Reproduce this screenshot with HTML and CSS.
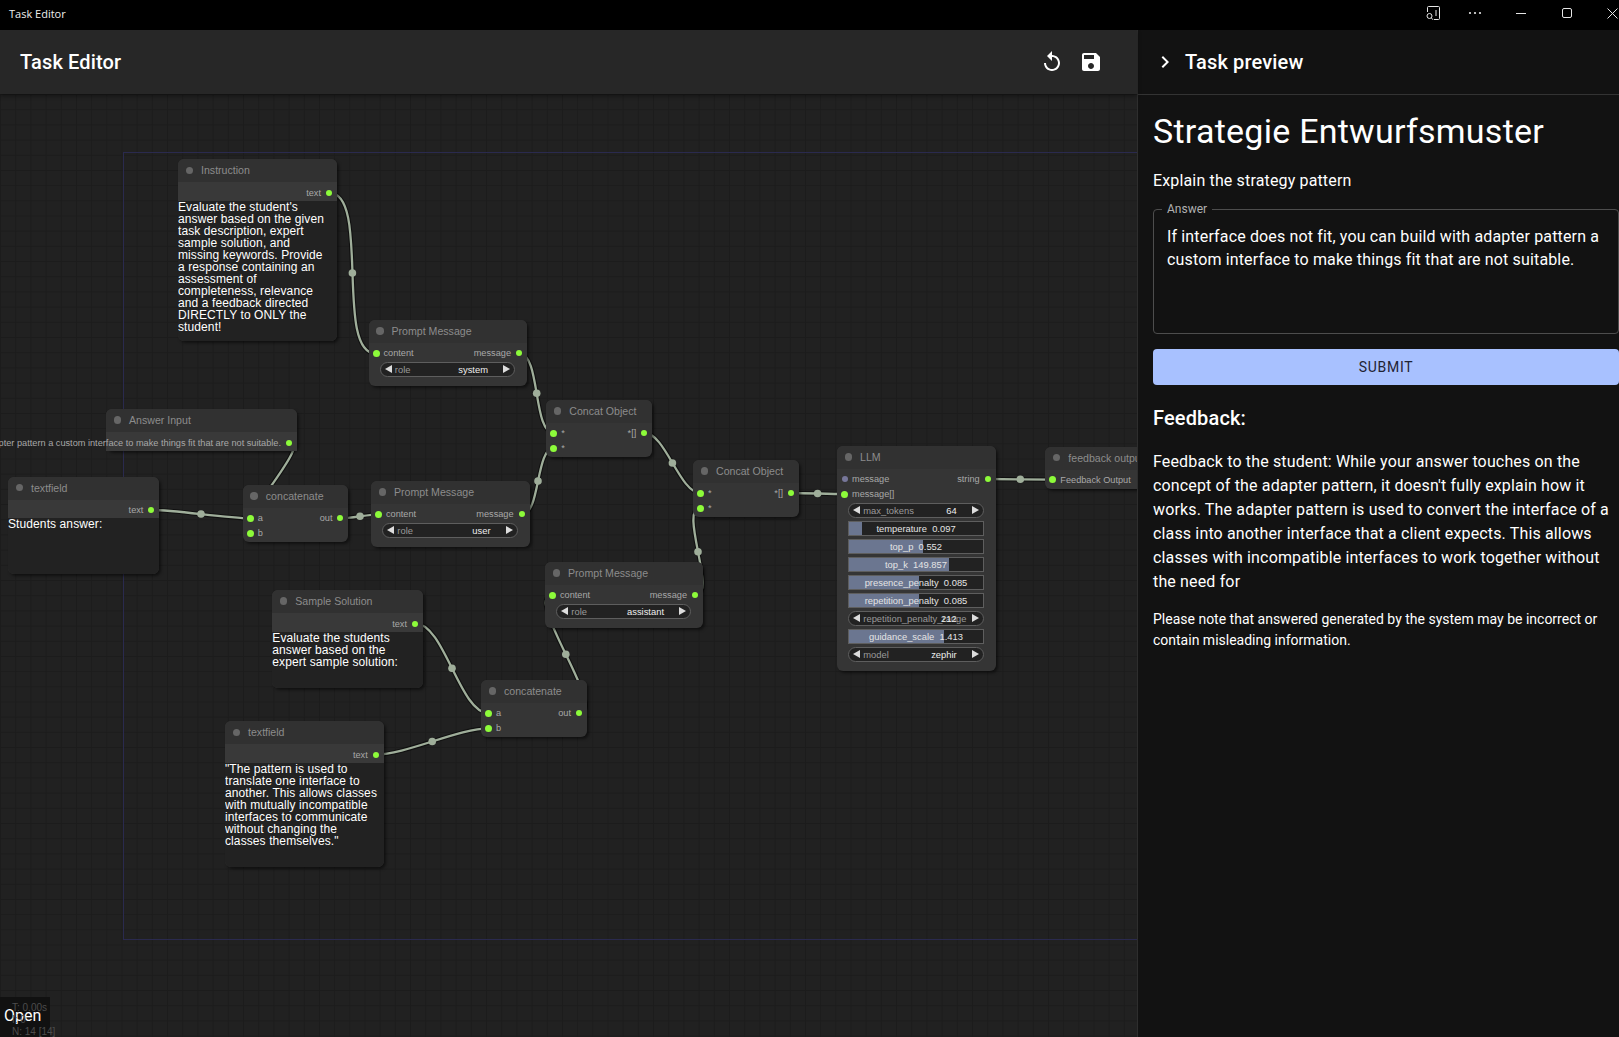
FILE: index.html
```html
<!DOCTYPE html>
<html lang="en">
<head>
  <meta charset="UTF-8" />
  <title>Task Editor</title>
  <link rel="stylesheet" href="styles.css">
</head>
<body>
  <!-- WINDOW TITLE BAR -->
  <div class="titlebar">
    <span class="titlebar-name">Task Editor</span>
    <div class="titlebar-btns">
      <svg class="win-inspect" width="16" height="16" viewBox="0 0 16 16"><path d="M2.5 7V2.5a1 1 0 0 1 1-1h10a1 1 0 0 1 1 1v11a1 1 0 0 1-1 1H9M11 5v6"/><circle cx="4.5" cy="11" r="2.5"/><path d="M6.3 12.8 8 14.8"/></svg>
      <svg class="win-more" width="14" height="4" viewBox="0 0 14 4"><circle cx="2" cy="2" r="1.1"/><circle cx="7" cy="2" r="1.1"/><circle cx="12" cy="2" r="1.1"/></svg>
      <svg class="win-min" width="10" height="10" viewBox="0 0 10 10"><path d="M0 5.5h10"/></svg>
      <svg class="win-max" width="10" height="10" viewBox="0 0 10 10"><rect x=".5" y=".5" width="9" height="9" rx="1.5"/></svg>
      <svg class="win-close" width="11" height="11" viewBox="0 0 11 11"><path d="M.5.5l10 10M10.5.5l-10 10"/></svg>
    </div>
  </div>

  <div class="main">
    <!-- EDITOR -->
    <div class="editor">
      <header class="editor-header">
        <h1>Task Editor</h1>
        <div class="editor-actions">
          <svg width="24" height="24" viewBox="0 0 24 24"><path d="M12 5V1L7 6l5 5V7c3.31 0 6 2.69 6 6s-2.69 6-6 6-6-2.69-6-6H4c0 4.42 3.58 8 8 8s8-3.58 8-8-3.58-8-8-8z"/></svg>
          <svg width="24" height="24" viewBox="0 0 24 24"><path d="M17 3H5c-1.11 0-2 .9-2 2v14c0 1.1.89 2 2 2h14c1.1 0 2-.9 2-2V7l-4-4zm-5 16c-1.66 0-3-1.34-3-3s1.34-3 3-3 3 1.34 3 3-1.34 3-3 3zm3-10H5V5h10v4z"/></svg>
        </div>
      </header>

      <div class="canvas">
        <div class="group-box"></div>

        <!-- wires, in page coordinates -->
        <svg class="wires" width="1137" height="943" viewBox="0 94 1137 943">
          <defs>
            <g id="links">
              <path d="M329 192.7C371 192.7 334 353.7 376 353.7"/>
              <path d="M519.3 353.7C540.9 353.7 532.4 433 554 433"/>
              <path d="M522 514.3C540.4 514.3 535.6 448 554 448"/>
              <path d="M644.7 433C665.2 433 679.8 493 700.3 493"/>
              <path d="M695.7 595.3C717.6 595.3 678.4 508 700.3 508"/>
              <path d="M791 493C804.3 493 831 494 844.3 494"/>
              <path d="M988 479C1004 479 1036.5 479.7 1052.7 479.7"/>
              <path d="M289.6 442C314.5 442 225.4 533.3 250.3 533.3"/>
              <path d="M151.9 510C176.6 510 225.6 518.3 250.3 518.3"/>
              <path d="M341 518.3C350.5 518.3 369.3 514.3 378.8 514.3"/>
              <path d="M415.3 623.3C444.3 623.3 459.7 713.3 488.7 713.3"/>
              <path d="M375.7 754.7C404.7 754.7 459.7 728.3 488.7 728.3"/>
              <path d="M579.3 713.3C609.6 713.3 522 595.3 552.3 595.3"/>
            </g>
          </defs>
          <use href="#links" class="wire-edge"/>
          <use href="#links" class="wire-line"/>
          <g class="wire-dots">
            <circle cx="352.4" cy="273" r="3.8"/>
            <circle cx="536.7" cy="393.3" r="3.8"/>
            <circle cx="538" cy="481" r="3.8"/>
            <circle cx="672.4" cy="463" r="3.8"/>
            <circle cx="698" cy="551.7" r="3.8"/>
            <circle cx="817.6" cy="493.5" r="3.8"/>
            <circle cx="1020.3" cy="479.3" r="3.8"/>
            <circle cx="201" cy="514" r="3.8"/>
            <circle cx="360" cy="516.3" r="3.8"/>
            <circle cx="452" cy="668.3" r="3.8"/>
            <circle cx="432.2" cy="741.5" r="3.8"/>
            <circle cx="565.8" cy="654.3" r="3.8"/>
          </g>
        </svg>

        <!-- nodes -->
        <div class="node node-instruction">
          <div class="node-title"><i></i>Instruction</div>
          <div class="slots slots-text">
            <div class="slot-row"><span class="slot-out">text<b></b></span></div>
          </div>
          <div class="node-text">Evaluate the student's answer based on the given task description, expert sample solution, and missing keywords. Provide a response containing an assessment of completeness, relevance and a feedback directed DIRECTLY to ONLY the student!</div>
        </div>

        <div class="node node-prompt1">
          <div class="node-title"><i></i>Prompt Message</div>
          <div class="slots">
            <div class="slot-row"><span class="slot-in"><b></b>content</span><span class="slot-out">message<b></b></span></div>
          </div>
          <div class="widgets">
            <div class="pill"><span class="pill-label">role</span><span class="pill-value">system</span></div>
          </div>
        </div>

        <div class="node node-answer">
          <div class="node-title"><i></i>Answer Input</div>
          <div class="slots slots-text">
            <div class="slot-row"><span class="slot-out">If interface does not fit, you can build with adapter pattern a custom interface to make things fit that are not suitable.<b></b></span></div>
          </div>
        </div>

        <div class="node node-textfield1">
          <div class="node-title"><i></i>textfield</div>
          <div class="slots slots-text">
            <div class="slot-row"><span class="slot-out">text<b></b></span></div>
          </div>
          <div class="node-text">Students answer:</div>
        </div>

        <div class="node node-concatenate1">
          <div class="node-title"><i></i>concatenate</div>
          <div class="slots">
            <div class="slot-row"><span class="slot-in"><b></b>a</span><span class="slot-out">out<b></b></span></div>
            <div class="slot-row"><span class="slot-in"><b></b>b</span></div>
          </div>
        </div>

        <div class="node node-prompt2">
          <div class="node-title"><i></i>Prompt Message</div>
          <div class="slots">
            <div class="slot-row"><span class="slot-in"><b></b>content</span><span class="slot-out">message<b></b></span></div>
          </div>
          <div class="widgets">
            <div class="pill"><span class="pill-label">role</span><span class="pill-value">user</span></div>
          </div>
        </div>

        <div class="node node-object1">
          <div class="node-title"><i></i>Concat Object</div>
          <div class="slots">
            <div class="slot-row"><span class="slot-in"><b></b>*</span><span class="slot-out">*[]<b></b></span></div>
            <div class="slot-row"><span class="slot-in"><b></b>*</span></div>
          </div>
        </div>

        <div class="node node-object2">
          <div class="node-title"><i></i>Concat Object</div>
          <div class="slots">
            <div class="slot-row"><span class="slot-in"><b></b>*</span><span class="slot-out">*[]<b></b></span></div>
            <div class="slot-row"><span class="slot-in"><b></b>*</span></div>
          </div>
        </div>

        <div class="node node-prompt3">
          <div class="node-title"><i></i>Prompt Message</div>
          <div class="slots">
            <div class="slot-row"><span class="slot-in"><b></b>content</span><span class="slot-out">message<b></b></span></div>
          </div>
          <div class="widgets">
            <div class="pill"><span class="pill-label">role</span><span class="pill-value">assistant</span></div>
          </div>
        </div>

        <div class="node node-llm">
          <div class="node-title"><i></i>LLM</div>
          <div class="slots">
            <div class="slot-row"><span class="slot-in"><b class="slot-empty"></b>message</span><span class="slot-out">string<b></b></span></div>
            <div class="slot-row"><span class="slot-in"><b></b>message[]</span></div>
          </div>
          <div class="widgets">
            <div class="pill"><span class="pill-label">max_tokens</span><span class="pill-value">64</span></div>
            <div class="slider"><div class="slider-fill" style="width:9.6%"></div><span>temperature  0.097</span></div>
            <div class="slider"><div class="slider-fill" style="width:55%"></div><span>top_p  0.552</span></div>
            <div class="slider"><div class="slider-fill" style="width:74.6%"></div><span>top_k  149.857</span></div>
            <div class="slider"><div class="slider-fill" style="width:52%"></div><span>presence_penalty  0.085</span></div>
            <div class="slider"><div class="slider-fill" style="width:52%"></div><span>repetition_penalty  0.085</span></div>
            <div class="pill"><span class="pill-label">repetition_penalty_range</span><span class="pill-value">212</span></div>
            <div class="slider"><div class="slider-fill" style="width:70.7%"></div><span>guidance_scale  1.413</span></div>
            <div class="pill"><span class="pill-label">model</span><span class="pill-value">zephir</span></div>
          </div>
        </div>

        <div class="node node-feedback">
          <div class="node-title"><i></i>feedback output</div>
          <div class="slots">
            <div class="slot-row"><span class="slot-in"><b></b>Feedback Output</span></div>
          </div>
        </div>

        <div class="node node-sample">
          <div class="node-title"><i></i>Sample Solution</div>
          <div class="slots slots-text">
            <div class="slot-row"><span class="slot-out">text<b></b></span></div>
          </div>
          <div class="node-text">Evaluate the students answer based on the expert sample solution:</div>
        </div>

        <div class="node node-concatenate2">
          <div class="node-title"><i></i>concatenate</div>
          <div class="slots">
            <div class="slot-row"><span class="slot-in"><b></b>a</span><span class="slot-out">out<b></b></span></div>
            <div class="slot-row"><span class="slot-in"><b></b>b</span></div>
          </div>
        </div>

        <div class="node node-textfield2">
          <div class="node-title"><i></i>textfield</div>
          <div class="slots slots-text">
            <div class="slot-row"><span class="slot-out">text<b></b></span></div>
          </div>
          <div class="node-text">"The pattern is used to translate one interface to another. This allows classes with mutually incompatible interfaces to communicate without changing the classes themselves."</div>
        </div>

        <!-- bottom left corner -->
        <div class="open-box">Open</div>
        <div class="graph-info">T: 0.00s<br>I: 0<br>N: 14 [14]</div>
      </div>
    </div>

    <!-- TASK PREVIEW -->
    <aside class="preview">
      <div class="preview-header">
        <svg width="24" height="24" viewBox="0 0 24 24"><path d="M10 6 8.59 7.41 13.17 12l-4.58 4.59L10 18l6-6z"/></svg>
        <h2>Task preview</h2>
      </div>
      <div class="preview-body">
        <h3>Strategie Entwurfsmuster</h3>
        <p class="question">Explain the strategy pattern</p>
        <fieldset class="answer">
          <legend>Answer</legend>
          <div class="answer-text">If interface does not fit, you can build with adapter pattern a custom interface to make things fit that are not suitable.</div>
        </fieldset>
        <button class="submit">Submit</button>
        <h4>Feedback:</h4>
        <p class="feedback">Feedback to the student: While your answer touches on the concept of the adapter pattern, it doesn't fully explain how it works. The adapter pattern is used to convert the interface of a class into another interface that a client expects. This allows classes with incompatible interfaces to work together without the need for</p>
        <p class="note">Please note that answered generated by the system may be incorrect or contain misleading information.</p>
      </div>
    </aside>
  </div>
</body>
</html>
```

FILE: styles.css
```css
:root {
  --wire: #9fae9a;
  --slot: #8dfb3a;
  --node: #353535;
  --node-title: #313131;
}
* {
  box-sizing: border-box;
}
html, body {
  height: 100%;
  overflow: hidden;
}
body {
  margin: 0;
  background: #121212;
  color: #fff;
  font-family: Roboto, sans-serif;
  display: flex;
  flex-direction: column;
}

/* title bar */
.titlebar {
  height: 30px;
  flex: none;
  background: #000;
  display: flex;
  align-items: center;
  justify-content: space-between;
  padding: 0 1px 4px 9px;
}
.titlebar-name {
  font-family: "Open Sans", sans-serif;
  font-size: 11px;
  color: #eee;
}
.titlebar-btns {
  display: flex;
  align-items: center;
}
.titlebar-btns svg {
  fill: none;
  stroke: #e6e6e6;
  stroke-width: 1;
}
.titlebar-btns .win-more {
  fill: #e6e6e6;
  stroke: none;
  margin-left: 27px;
}
.win-min {
  margin-left: 34px;
}
.win-max {
  margin-left: 36px;
}
.win-close {
  margin-left: 35px;
}

.main {
  flex: 1;
  display: flex;
  min-height: 0;
}

/* editor */
.editor {
  width: 1137px;
  flex: none;
  display: flex;
  flex-direction: column;
}
.editor-header {
  height: 64px;
  flex: none;
  background: #272727;
  display: flex;
  align-items: center;
  justify-content: space-between;
  padding: 0 34px 0 20px;
  box-shadow: 0 2px 4px rgba(0, 0, 0, 0.4);
  position: relative;
  z-index: 2;
}
.editor-header h1 {
  margin: 0;
  font-size: 20px;
  font-weight: 500;
  letter-spacing: 0.15px;
}
.editor-actions {
  display: flex;
  gap: 15px;
}
.editor-actions svg {
  fill: #fff;
}

/* node canvas */
.canvas {
  flex: 1;
  position: relative;
  overflow: hidden;
  background-color: #212121;
  background-image:
    linear-gradient(#1c1c1c 1px, transparent 1px),
    linear-gradient(90deg, #1c1c1c 1px, transparent 1px);
  background-size: 15.2px 15.2px;
}
.group-box {
  position: absolute;
  left: 123px;
  top: 58px;
  width: 1100px;
  height: 788px;
  border: 1px solid #2a2a4e;
}
.wires {
  position: absolute;
  left: 0;
  top: 0;
}
.wire-edge {
  fill: none;
  stroke: rgba(0, 0, 0, 0.5);
  stroke-width: 4.5;
}
.wire-line {
  fill: none;
  stroke: var(--wire);
  stroke-width: 2.3;
}
.wire-dots {
  fill: var(--wire);
}

.node {
  position: absolute;
  display: flex;
  flex-direction: column;
  background: var(--node);
  border-radius: 6px;
  box-shadow: 2px 2px 3px rgba(0, 0, 0, 0.5);
  font-family: "Liberation Sans", Arial, sans-serif;
}
.node-title {
  height: 23px;
  flex: none;
  display: flex;
  align-items: center;
  padding: 0 0 1px 7.5px;
  background: var(--node-title);
  border-radius: 6px 6px 0 0;
  font-size: 10.6px;
  color: #8c8c8c;
  white-space: nowrap;
}
.node-title i {
  width: 7.5px;
  height: 7.5px;
  border-radius: 50%;
  background: #666;
  margin-right: 8px;
}
.slots {
  flex: none;
  padding-top: 2.5px;
}
.slots-text {
  height: 19px;
  padding-top: 3px;
  background: #393939;
}
.slot-row {
  height: 15px;
  display: flex;
  align-items: center;
  justify-content: flex-end;
  font-size: 9.2px;
  color: #a8a8a8;
  white-space: nowrap;
}
.slot-in, .slot-out {
  display: flex;
  align-items: center;
}
.slot-in {
  padding-left: 4px;
  margin-right: auto;
}
.slot-in b {
  width: 7px;
  height: 7px;
  margin-right: 4px;
  border-radius: 50%;
  background: var(--slot);
}
.slot-in b.slot-empty {
  background: #77779a;
  width: 6px;
  height: 6px;
  margin-left: 0.5px;
  margin-right: 4.5px;
}
.slot-out {
  flex: none;
  padding-right: 5px;
}
.slot-out b {
  flex: none;
  width: 6px;
  height: 6px;
  margin-left: 5px;
  border-radius: 50%;
  background: var(--slot);
}
.node-text {
  flex: 1;
  margin-top: -0.5px;
  padding-right: 6px;
  background: #222;
  border-radius: 0 0 6px 6px;
  color: #fff;
  font-size: 12px;
  line-height: 12px;
  letter-spacing: 0.1px;
  overflow: hidden;
}
.widgets {
  display: flex;
  flex-direction: column;
  gap: 2.8px;
  padding: 1.5px 12px 0 11.3px;
  font-size: 9.4px;
}
.pill {
  height: 15.2px;
  display: flex;
  align-items: center;
  padding: 0 26px 0 14px;
  background: #222;
  border: 1px solid #5e5e5e;
  border-radius: 8px;
  position: relative;
  white-space: nowrap;
}
.pill::before, .pill::after {
  content: '';
  position: absolute;
  top: 2.1px;
  border-style: solid;
  border-color: transparent;
  border-width: 4.5px 0;
}
.pill::before {
  left: 4px;
  border-right: 7px solid #ddd;
}
.pill::after {
  right: 4px;
  border-left: 7px solid #ddd;
}
.pill-label {
  width: 0;
  color: #9a9a9a;
}
.pill-value {
  margin-left: auto;
  color: #eee;
}
.slider {
  height: 15.2px;
  background: #222;
  border: 1px solid #5e5e5e;
  position: relative;
  display: flex;
  align-items: center;
  justify-content: center;
  color: #e4e4e4;
  white-space: pre;
}
.slider span {
  position: relative;
}
.slider-fill {
  position: absolute;
  left: 0;
  top: 0;
  bottom: 0;
  background: #6b7690;
}

/* node places on the graph (top = page y - 94) */
.node-instruction { left: 178px; top: 65.3px; width: 159px; height: 181.7px; }
.node-prompt1 { left: 368.5px; top: 226px; width: 158.5px; height: 66px; }
.node-answer { left: 106px; top: 315px; width: 191px; height: 42px; }
.node-textfield1 { left: 8px; top: 382.7px; width: 151.4px; height: 97.6px; }
.node-concatenate1 { left: 242.8px; top: 391px; width: 105.7px; height: 57.3px; }
.node-prompt2 { left: 371px; top: 387px; width: 158.6px; height: 66px; }
.node-object1 { left: 546.3px; top: 306px; width: 106px; height: 57px; }
.node-object2 { left: 693px; top: 366px; width: 106px; height: 57px; }
.node-prompt3 { left: 545px; top: 468px; width: 158px; height: 66px; }
.node-llm { left: 837px; top: 352px; width: 158.7px; height: 225px; }
.node-feedback { left: 1045.3px; top: 352.7px; width: 140px; height: 42px; }
.node-sample { left: 272.3px; top: 496px; width: 150.7px; height: 97.7px; }
.node-concatenate2 { left: 481px; top: 586px; width: 106px; height: 57px; }
.node-textfield2 { left: 225px; top: 627.3px; width: 158.7px; height: 145.4px; }

.open-box {
  position: absolute;
  left: 0;
  bottom: 0;
  width: 50px;
  height: 40px;
  padding: 9px 0 0 4px;
  background: #111;
  font-size: 16px;
  line-height: 20px;
}
.graph-info {
  position: absolute;
  left: 12px;
  top: 908px;
  font-family: "Liberation Sans", sans-serif;
  font-size: 10px;
  line-height: 12px;
  color: #4c4c4c;
  white-space: nowrap;
}

/* task preview */
.preview {
  flex: 1;
  min-width: 0;
  background: #121212;
  border-left: 1px solid #2e2e2e;
  display: flex;
  flex-direction: column;
}
.preview-header {
  height: 65px;
  flex: none;
  display: flex;
  align-items: center;
  padding-left: 15px;
  border-bottom: 1px solid #333;
}
.preview-header svg {
  fill: #fff;
  margin-right: 8px;
}
.preview-header h2 {
  margin: 0;
  font-size: 20px;
  font-weight: 500;
  letter-spacing: 0.15px;
}
.preview-body {
  padding: 15px 0 0 15px;
}
.preview-body h3 {
  margin: 0;
  font-size: 34px;
  font-weight: 400;
  line-height: 42px;
  letter-spacing: 0.25px;
}
.question {
  margin: 17px 0 0;
  font-size: 16px;
  line-height: 24px;
  letter-spacing: 0.15px;
}
.answer {
  margin: 9px 0 0;
  padding: 0 13px;
  height: 132px;
  border: 1px solid #4d4d4d;
  border-radius: 4px;
}
.answer legend {
  margin-left: -5px;
  padding: 0 5px;
  font-size: 12px;
  line-height: 14px;
  color: #b0b0b0;
}
.answer-text {
  margin-top: 9px;
  font-size: 16px;
  line-height: 23px;
  letter-spacing: 0.15px;
}
.submit {
  display: block;
  width: 100%;
  height: 36px;
  margin-top: 15px;
  background: #a8c1ff;
  color: #1f2333;
  border: none;
  border-radius: 4px;
  font-family: Roboto, sans-serif;
  font-size: 14px;
  font-weight: 400;
  letter-spacing: 0.7px;
  text-transform: uppercase;
}
.preview-body h4 {
  margin: 21px 0 0;
  font-size: 20px;
  font-weight: 500;
  line-height: 24px;
  letter-spacing: 0.15px;
}
.feedback {
  margin: 20px 0 0;
  font-size: 16px;
  line-height: 24px;
  letter-spacing: 0.15px;
}
.note {
  margin: 15px 0 0;
  font-size: 14px;
  line-height: 21px;
}
```
